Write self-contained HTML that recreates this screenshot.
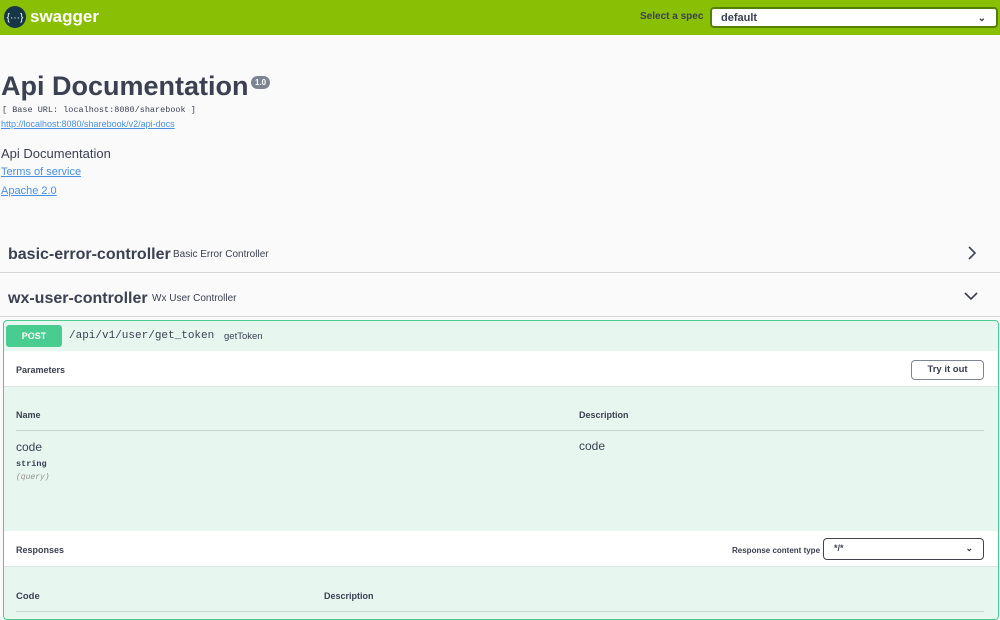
<!DOCTYPE html>
<html><head><meta charset="utf-8"><style>
*{box-sizing:border-box;margin:0;padding:0}
body{width:1000px;height:616px;overflow:hidden;background:#fafafa;font-family:"Liberation Sans",sans-serif;color:#3b4151;position:relative}
.a{position:absolute}
.hdr{left:0;top:0;width:1000px;height:35px;background:#89bf04}
a{color:#4990e2;text-decoration:underline}
.mono{font-family:"Liberation Mono",monospace}
.sel{background:#fff;border:2px solid #547f00;border-radius:4px;font-weight:bold;font-size:11px;padding-left:9px;line-height:19px}
</style></head><body>
<div class="a hdr"></div>
<svg class="a" style="left:3px;top:5px" width="24" height="24" viewBox="0 0 24 24"><circle cx="12" cy="12" r="11" fill="#173647"/><text x="12" y="15.5" text-anchor="middle" font-size="10" fill="#fff" font-family="Liberation Sans">{···}</text></svg>
<div class="a" style="left:30px;top:7px;color:#fff;font-weight:bold;font-size:17px">swagger</div>
<div class="a" style="left:640px;top:11px;color:#3b4151;font-weight:bold;font-size:10px">Select a spec</div>
<div class="a sel" style="left:710px;top:7px;width:288px;height:21px">default<span class="a" style="right:10px;top:0;font-size:10px">&#8964;</span></div>

<div class="a" style="left:1px;top:71px;font-size:27px;font-weight:bold">Api Documentation</div>
<div class="a" style="left:251px;top:76px;background:#7d8492;color:#fff;border-radius:8px;font-size:8px;font-weight:bold;padding:2px 4px">1.0</div>
<div class="a mono" style="left:2px;top:105px;font-size:8.5px;color:#3b4151">[ Base URL: localhost:8080/sharebook ]</div>
<a class="a" style="left:1px;top:119px;font-size:9px">http://localhost:8080/sharebook/v2/api-docs</a>
<div class="a" style="left:1px;top:146px;font-size:13px">Api Documentation</div>
<a class="a" style="left:1px;top:166px;font-size:11px">Terms of service</a>
<a class="a" style="left:1px;top:185px;font-size:11px">Apache 2.0</a>

<div class="a" style="left:8px;top:246px;font-size:16px;font-weight:bold">basic-error-controller</div>
<div class="a" style="left:173px;top:249px;font-size:10px">Basic Error Controller</div>
<svg class="a" style="left:965px;top:246px" width="14" height="14"><path d="M4 1l6 6-6 6" stroke="#3b4151" stroke-width="1.6" fill="none"/></svg>
<div class="a" style="left:0;top:272px;width:1000px;height:1px;background:#d5d7da"></div>
<div class="a" style="left:8px;top:290px;font-size:16px;font-weight:bold">wx-user-controller</div>
<div class="a" style="left:152px;top:293px;font-size:10px">Wx User Controller</div>
<svg class="a" style="left:964px;top:290px" width="14" height="12"><path d="M1 3l6 6 6-6" stroke="#3b4151" stroke-width="1.6" fill="none"/></svg>
<div class="a" style="left:0;top:316px;width:1000px;height:1px;background:#d5d7da"></div>

<div class="a" style="left:3px;top:320px;width:996px;height:300px;border:1px solid #49cc90;border-radius:4px;background:#e8f6f0"></div>
<div class="a" style="left:6px;top:325px;width:56px;height:22px;background:#49cc90;border-radius:3px;color:#fff;font-weight:bold;font-size:9px;text-align:center;line-height:22px">POST</div>
<div class="a mono" style="left:69px;top:330px;font-size:11px">/api/v1/user/get_token</div>
<div class="a" style="left:224px;top:331px;font-size:9.5px">getToken</div>
<div class="a" style="left:4px;top:351px;width:994px;height:36px;background:#fff;border-bottom:1px solid #dde6e2"></div>
<div class="a" style="left:16px;top:365px;font-size:9px;font-weight:bold">Parameters</div>
<div class="a" style="left:911px;top:360px;width:73px;height:20px;border:1.5px solid #7d8492;border-radius:4px;font-size:9.5px;font-weight:bold;text-align:center;line-height:17px;background:#fff">Try it out</div>
<div class="a" style="left:16px;top:410px;font-size:9px;font-weight:bold">Name</div>
<div class="a" style="left:579px;top:410px;font-size:9px;font-weight:bold">Description</div>
<div class="a" style="left:16px;top:430px;width:968px;height:1px;background:#c9d6d0"></div>
<div class="a" style="left:16px;top:440px;font-size:12px">code</div>
<div class="a" style="left:579px;top:439px;font-size:12px">code</div>
<div class="a mono" style="left:16px;top:459px;font-size:8.5px;font-weight:bold">string</div>
<div class="a mono" style="left:16px;top:473px;font-size:8px;font-style:italic;color:#909090">(query)</div>
<div class="a" style="left:4px;top:531px;width:994px;height:36px;background:#fff;border-bottom:1px solid #dde6e2"></div>
<div class="a" style="left:16px;top:545px;font-size:9px;font-weight:bold">Responses</div>
<div class="a" style="left:732px;top:546px;font-size:8px;font-weight:bold">Response content type</div>
<div class="a" style="left:823px;top:538px;width:161px;height:22px;border:1.5px solid #41444e;border-radius:4px;background:#fff;font-size:9px;font-weight:bold;padding-left:10px;line-height:19px">*/*<span class="a" style="right:10px;top:0">&#8964;</span></div>
<div class="a" style="left:16px;top:591px;font-size:9.5px;font-weight:bold">Code</div>
<div class="a" style="left:324px;top:591px;font-size:9px;font-weight:bold">Description</div>
<div class="a" style="left:16px;top:611px;width:968px;height:1px;background:#c9d6d0"></div>
</body></html>
